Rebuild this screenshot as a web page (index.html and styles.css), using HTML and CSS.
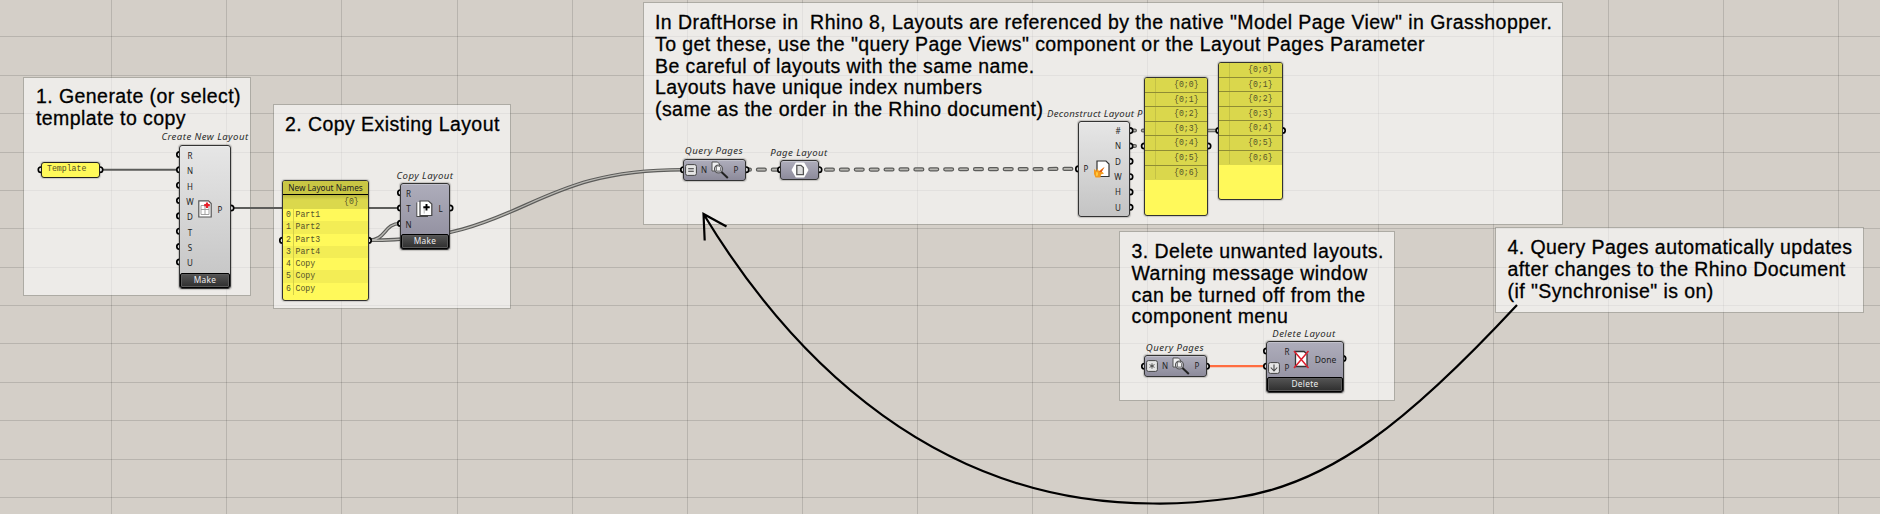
FILE: index.html
```html
<!DOCTYPE html>
<html lang="en">
<head>
<meta charset="utf-8">
<title>Layouts definition</title>
<link rel="stylesheet" href="styles.css">
</head>
<body>
<main class="canvas">
<svg class="layer" width="1880" height="514">
  <path class="grid" d="M111.5 0V514M226.5 0V514M341.5 0V514M457.5 0V514M572.5 0V514M687.5 0V514M802.5 0V514M917.5 0V514M1032.5 0V514M1147.5 0V514M1263.5 0V514M1378.5 0V514M1493.5 0V514M1608.5 0V514M1723.5 0V514M1838.5 0V514M0 36.500H1880M0 75.500H1880M0 113.500H1880M0 152.500H1880M0 190.500H1880M0 228.500H1880M0 267.500H1880M0 305.500H1880M0 343.500H1880M0 382.500H1880M0 420.500H1880M0 459.500H1880M0 497.500H1880"/>
</svg>

<section class="group g-create"><p class="note"><span>1. Generate (or select)</span><span>template to copy</span></p></section>
<section class="group g-copy"><p class="note"><span>2. Copy Existing Layout</span></p></section>
<section class="group g-query"><p class="note"><span>In DraftHorse in  Rhino 8, Layouts are referenced by the native "Model Page View" in Grasshopper.</span><span>To get these, use the "query Page Views" component or the Layout Pages Parameter</span><span>Be careful of layouts with the same name.</span><span>Layouts have unique index numbers</span><span>(same as the order in the Rhino document)</span></p></section>
<section class="group g-delete"><p class="note"><span>3. Delete unwanted layouts.</span><span>Warning message window</span><span>can be turned off from the</span><span>component menu</span></p></section>
<section class="group g-sync"><p class="note"><span>4. Query Pages automatically updates</span><span>after changes to the Rhino Document</span><span>(if "Synchronise" is on)</span></p></section>

<svg class="layer" width="1880" height="514">
  <g class="wire"><path d="M101 169.700H178M234 208H399"/></g>
  <g class="wire-list"><path d="M369 240.300C386 240.300 384 223.500 400 223.500M369 240.300C526 240.300 526 169.700 683 169.700M1208 130.500H1218"/></g>
  <g class="wire-core"><path d="M369 240.300C386 240.300 384 223.500 400 223.500M369 240.300C526 240.300 526 169.700 683 169.700M1208 130.500H1218"/></g>
  <g class="wire-tree"><path d="M743 169.700H780M826 169.700L1076 168.900M1128 130.500H1150M1128 146H1143"/></g>
  <g class="tree-core"><path d="M743 169.700H780M826 169.700L1076 168.900M1128 130.500H1150M1128 146H1143"/></g>
  <path class="wire-hot" d="M1208 366.200H1265"/>
  <path class="arrow" d="M703.500 214C795 365 940 503.500 1153 503.500C1180 504 1208 501.500 1233.700 498C1330 485 1410 420 1517 305M726.500 226.500L703.500 214L704.700 240.500"/>
  <g class="port">
    <circle cx="41" cy="169.700" r="2.700"/><circle cx="100" cy="169.700" r="2.700"/>
    <circle cx="179.500" cy="154.500" r="2.700"/><circle cx="179.500" cy="169.800" r="2.700"/><circle cx="179.500" cy="185.200" r="2.700"/><circle cx="179.500" cy="200.500" r="2.700"/><circle cx="179.500" cy="215.900" r="2.700"/><circle cx="179.500" cy="231.200" r="2.700"/><circle cx="179.500" cy="246.600" r="2.700"/><circle cx="179.500" cy="262" r="2.700"/>
    <circle cx="231" cy="208" r="2.700"/>
    <circle cx="282.500" cy="240.400" r="2.700"/><circle cx="368.500" cy="240.400" r="2.700"/>
    <circle cx="400.500" cy="192.700" r="2.700"/><circle cx="400.500" cy="208" r="2.700"/><circle cx="400.500" cy="223.400" r="2.700"/><circle cx="450" cy="208" r="2.700"/>
    <circle cx="683.500" cy="169.700" r="2.700"/><circle cx="746" cy="169.700" r="2.700"/>
    <circle cx="780.500" cy="169.700" r="2.700"/><circle cx="819" cy="169.700" r="2.700"/>
    <circle cx="1078.500" cy="168.900" r="2.700"/>
    <circle cx="1130" cy="130.600" r="2.700"/><circle cx="1130" cy="146" r="2.700"/><circle cx="1130" cy="161.300" r="2.700"/><circle cx="1130" cy="176.700" r="2.700"/><circle cx="1130" cy="192" r="2.700"/><circle cx="1130" cy="207.300" r="2.700"/>
    <circle cx="1144.300" cy="146" r="2.700"/><circle cx="1208" cy="146" r="2.700"/>
    <circle cx="1218.800" cy="130.500" r="2.700"/><circle cx="1282.500" cy="130.500" r="2.700"/>
    <circle cx="1144.500" cy="366.200" r="2.700"/><circle cx="1206.500" cy="366.200" r="2.700"/>
    <circle cx="1266.500" cy="351" r="2.700"/><circle cx="1266.500" cy="366.200" r="2.700"/><circle cx="1343" cy="358.500" r="2.700"/>
  </g>
</svg>

<div class="title t-create">Create New Layout</div>
<div class="title t-copy">Copy Layout</div>
<div class="title t-queryA">Query Pages</div>
<div class="title t-page">Page Layout</div>
<div class="title t-decon">Deconstruct Layout P</div>
<div class="title t-queryB">Query Pages</div>
<div class="title t-delete">Delete Layout</div>

<div class="panel p-template"><span>Template</span></div>

<div class="node plain n-create">
  <div class="body">
    <div class="col"><span>R</span><span>N</span><span>H</span><span>W</span><span>D</span><span>T</span><span>S</span><span>U</span></div>
    <svg class="icon" width="14" height="18" viewBox="0 0 14 18"><path d="M.8.800H10.500L13.200 3.500V17H.8Z" fill="#fff" stroke="#555" stroke-width="1.200"/><path d="M3 5.500H11V14.500H3ZM7 5.500V14.500M3 9.500H11" fill="none" stroke="#999" stroke-width=".9"/><path d="M9 2.500V8M6.200 5.200H11.800" stroke="#e8202a" stroke-width="2.200"/></svg>
    <div class="col"><span>P</span></div>
  </div>
  <div class="button">Make</div>
</div>

<div class="panel p-names">
  <div class="head">New Layout Names</div>
  <div class="path">{0}</div>
  <ol class="items">
    <li><i>0</i>Part1</li><li><i>1</i>Part2</li><li><i>2</i>Part3</li><li><i>3</i>Part4</li><li><i>4</i>Copy</li><li><i>5</i>Copy</li><li><i>6</i>Copy</li>
  </ol>
</div>

<div class="node n-copy">
  <div class="body">
    <div class="col"><span>R</span><span>T</span><span>N</span></div>
    <svg class="icon" width="17" height="18" viewBox="0 0 17 18"><path d="M1 2.500V16.500H12" fill="#fff" stroke="#444" stroke-width="1.200"/><path d="M1.500 2H4V16H1.500Z" fill="#fff"/><path d="M4 1H12.500L15.800 4V15.500H4Z" fill="#fff" stroke="#444" stroke-width="1.200"/><path d="M8.200 8V13.500" stroke="#bbb"/><path d="M10.500 4V10.500M7.300 7.200H13.700" stroke="#000" stroke-width="1.900"/></svg>
    <div class="col"><span>L</span></div>
  </div>
  <div class="button">Make</div>
</div>

<div class="node n-queryA">
  <div class="body">
    <svg class="badge" width="12" height="12" viewBox="0 0 12 12"><rect x=".6" y=".6" width="10.800" height="10.800" rx="1.800" fill="#e6e6e6" stroke="#444"/><path d="M3.200 4.700H8.800M3.200 7.300H8.800" stroke="#333" stroke-width="1.100"/></svg>
    <div class="col"><span>N</span></div>
    <svg class="icon lens" width="18" height="18" viewBox="0 0 18 18"><path d="M1 1H6.500L8.500 3V10H1Z" fill="#f0f0f2" stroke="#555"/><circle cx="7.500" cy="8" r="4" fill="#d0d0d8" fill-opacity=".7" stroke="#555" stroke-width="1.200"/><path d="M5.500 5H8L9.500 6.500V10H5.500Z" fill="#f4f4f4" stroke="#666" stroke-width=".8"/><path d="M10.500 11L16.800 17" stroke="#222" stroke-width="2"/></svg>
    <div class="col"><span>P</span></div>
  </div>
</div>

<div class="node n-page">
  <svg width="18" height="16" viewBox="0 0 18 16"><path d="M4.800.500H13.200L17.500 8L13.200 15.500H4.800L.5 8Z" fill="#fff"/><path d="M5.800 3.300H10L12.400 5.600V12.700H5.800Z" fill="#ddd" stroke="#555" stroke-width="1.300"/></svg>
</div>

<div class="node plain n-decon">
  <div class="body">
    <div class="col"><span>P</span></div>
    <svg class="icon" width="18" height="18" viewBox="0 0 18 18"><path d="M4 1H13L16 4V16.500H4Z" fill="#fff" stroke="#333" stroke-width="1.200"/><path d="M1 9L3.500 11L4 8.500L6 11L11.500 7L8.800 11.500L11 13.500L8 14.500L7.500 17.500H2.500L1 14Z" fill="#f49a1c"/><path d="M6 12L11.500 7L8.500 12Z" fill="#d9511b"/><path d="M3 12L5 12.500L5 15.500L3 16Z" fill="#ffc93c"/></svg>
    <div class="col"><span>#</span><span>N</span><span>D</span><span>W</span><span>H</span><span>U</span></div>
  </div>
</div>

<div class="panel tree p-treeA"><span>{0;0}</span><span>{0;1}</span><span>{0;2}</span><span>{0;3}</span><span>{0;4}</span><span>{0;5}</span><span>{0;6}</span></div>
<div class="panel tree p-treeB"><span>{0;0}</span><span>{0;1}</span><span>{0;2}</span><span>{0;3}</span><span>{0;4}</span><span>{0;5}</span><span>{0;6}</span></div>

<div class="node n-queryB">
  <div class="body">
    <svg class="badge" width="12" height="12" viewBox="0 0 12 12"><rect x=".6" y=".6" width="10.800" height="10.800" rx="1.800" fill="#e6e6e6" stroke="#444"/><path d="M6 3.300V8.700M3.500 4.600L8.500 7.400M3.500 7.400L8.500 4.600" stroke="#444" stroke-width=".9"/></svg>
    <div class="col"><span>N</span></div>
    <svg class="icon lens" width="18" height="18" viewBox="0 0 18 18"><path d="M1 1H6.500L8.500 3V10H1Z" fill="#f0f0f2" stroke="#555"/><circle cx="7.500" cy="8" r="4" fill="#d0d0d8" fill-opacity=".7" stroke="#555" stroke-width="1.200"/><path d="M5.500 5H8L9.500 6.500V10H5.500Z" fill="#f4f4f4" stroke="#666" stroke-width=".8"/><path d="M10.500 11L16.800 17" stroke="#222" stroke-width="2"/></svg>
    <div class="col"><span>P</span></div>
  </div>
</div>

<div class="node n-delete">
  <div class="body">
    <svg class="badge" width="12" height="12" viewBox="0 0 12 12"><rect x=".6" y=".6" width="10.800" height="10.800" rx="1.800" fill="#e6e6e6" stroke="#444"/><path d="M6 2.500V9M2.800 5.500L6 9L9.200 5.500" fill="none" stroke="#444" stroke-width="1.100"/></svg>
    <div class="col"><span>R</span><span>P</span></div>
    <svg class="icon" width="17" height="19" viewBox="0 0 17 19"><path d="M2.500 1.500H11L14 4V16.500H2.500Z" fill="#fff" stroke="#333" stroke-width="1.300"/><path d="M1 1L15.500 18M15.500 1L1 18" stroke="#dc1f2e" stroke-width="1.500"/></svg>
    <div class="col"><span>Done</span></div>
  </div>
  <div class="button">Delete</div>
</div>
</main>
</body>
</html>
```

FILE: styles.css
```css
body { margin: 0; }
.canvas {
  position: relative;
  width: 1880px;
  height: 514px;
  overflow: hidden;
  background: #d4cfc8;
  font-family: "Noto Sans", sans-serif;
}
.layer { position: absolute; left: 0; top: 0; }
.grid { stroke: #000; stroke-opacity: .13; fill: none; }

/* groups with notes */
.group {
  position: absolute;
  box-sizing: border-box;
  border: 1px solid rgba(120, 122, 115, .42);
  background: rgba(255, 255, 255, .59);
  background-clip: padding-box;
}
.note {
  margin: 0;
  white-space: pre;
  font: 19.5px/21.7px "Liberation Sans", Arial, sans-serif;
  letter-spacing: .43px;
  color: #000;
  -webkit-text-stroke: .3px #000;
}
.note span { display: block; width: fit-content; }
.g-create { left: 23px; top: 77px; width: 228px; height: 219px; padding: 8.100px 12px; }
.g-copy { left: 273px; top: 104px; width: 238px; height: 205px; padding: 9px 11px; }
.g-query { left: 643px; top: 2px; width: 920px; height: 223px; padding: 9.100px 11px; }
.g-delete { left: 1119px; top: 231px; width: 276px; height: 170px; padding: 9.100px 11.500px; }
.g-sync { left: 1495px; top: 227px; width: 369px; height: 86px; padding: 9.100px 11.500px; }

/* wires */
.wire { stroke: #5c5c5a; stroke-width: 2; fill: none; }
.wire-list { stroke: #5c5c5a; stroke-width: 3.600; fill: none; }
.wire-core { stroke: #b9b8b3; stroke-width: 1.300; fill: none; }
.wire-tree { stroke: #5c5c5a; stroke-width: 4.200; stroke-dasharray: 6.900 8; stroke-linecap: round; fill: none; }
.tree-core { stroke: #b9b8b3; stroke-width: 1.700; stroke-dasharray: 6.900 8; stroke-linecap: round; fill: none; }
.wire-hot { stroke: #ff6d40; stroke-width: 2.300; }
.arrow { stroke: #000; stroke-width: 2.200; fill: none; }
.port { fill: #fff; stroke: #000; stroke-width: 1.700; }

/* component titles */
.title {
  position: absolute;
  width: 130px;
  text-align: center;
  white-space: nowrap;
  font: italic 9.600px/12px "Noto Sans", sans-serif;
  letter-spacing: .45px;
  color: #2b2b2b;
}
.t-create { left: 140px; top: 131px; }
.t-copy { left: 360px; top: 170px; }
.t-queryA { left: 649px; top: 145px; }
.t-page { left: 734px; top: 146.500px; }
.t-decon { left: 1047px; top: 107.500px; width: 97px; overflow: hidden; text-align: left; letter-spacing: .3px; }
.t-queryB { left: 1110px; top: 342px; }
.t-delete { left: 1239px; top: 328px; }

/* components */
.node {
  position: absolute;
  box-sizing: border-box;
  display: flex;
  flex-direction: column;
  border: 1px solid #333;
  border-radius: 3px;
  background: linear-gradient(#aeadbb, #8d8b9b);
  box-shadow: 0 0 1px 1px rgba(0, 0, 0, .18), inset 0 1px 0 rgba(255, 255, 255, .25);
  font-size: 8px;
  color: #222;
}
.plain { background: linear-gradient(#e6e6e6, #c4c4c4); }
.body { flex: 1; display: flex; align-items: center; }
.col { display: flex; flex-direction: column; text-align: center; line-height: 15.350px; width: 12px; }
.icon { flex: none; }
.button {
  box-sizing: border-box;
  height: 15px;
  border: 1px solid #000;
  border-radius: 2px;
  background: linear-gradient(#555, #2e2e2e);
  box-shadow: inset 0 0 0 1px #5a5a5a;
  color: #eee;
  text-align: center;
  font-size: 8.300px;
  line-height: 12.500px;
  letter-spacing: .3px;
}
.n-create { left: 179px; top: 145px; width: 52px; height: 143.500px; }
.n-create .body { padding: 0 4px 0 4px; gap: 2px; }
.n-copy { left: 400px; top: 183px; width: 50px; height: 67px; }
.n-copy .body { padding: 0 3px 0 2px; gap: 2px; }
.n-queryA { left: 683px; top: 159px; width: 63px; height: 22px; }
.n-queryB { left: 1144px; top: 355px; width: 63px; height: 22px; }
.n-queryA .body, .n-queryB .body { padding-left: 1px; gap: 1px; }
.lens { align-self: flex-start; margin-top: 1px; }
.n-page { left: 780px; top: 160px; width: 39px; height: 20px; align-items: center; justify-content: center; }
.n-decon { left: 1078px; top: 121px; width: 52px; height: 96px; }
.n-decon .body { padding-left: 1px; gap: 1px; }
.n-delete { left: 1266px; top: 341px; width: 78px; height: 52px; }
.n-delete .body { padding-left: 1px; gap: 1px; }
.n-delete .badge { align-self: flex-end; margin-bottom: 3px; }
.n-delete .icon { margin-left: -1px; }
.n-delete .col:last-child { width: 29px; font-size: 8.500px; }

/* panels */
.panel {
  position: absolute;
  box-sizing: border-box;
  overflow: hidden;
  border: 1px solid #333;
  border-radius: 3px;
  background: #fff95a;
  box-shadow: 0 0 1px 1px rgba(0, 0, 0, .15);
  font: 8.200px/12.270px "Liberation Mono", monospace;
  color: #55532a;
}
.p-template { left: 41px; top: 162px; width: 59px; height: 16px; padding-left: 5px; border-color: #222; }
.p-names { left: 282px; top: 180px; width: 87px; height: 121px; }
.head {
  height: 13px;
  border-bottom: 1px solid #000;
  background: #c9c644;
  color: #222;
  text-align: center;
  font: 8.200px/13px "Noto Sans", sans-serif;
}
.path { height: 14px; padding-left: 61px; background: linear-gradient(#bab73f, #dbd84c 35%); line-height: 13px; }
.items { margin: 0; padding: 0; list-style: none; }
.items li { display: flex; gap: 2.500px; padding-left: 3px; background: linear-gradient(90deg, transparent 10.500px, #d2cd4a 10.500px, #d2cd4a 11.500px, transparent 11.500px); line-height: 12.270px; }
.items li:nth-child(even) { background-color: #f3ed55; }
.items i { font-style: normal; width: 7px; }
.tree span {
  display: block;
  box-sizing: border-box;
  height: 14.620px;
  padding-left: 29px;
  border-bottom: 1px solid #8f8c34;
  background: linear-gradient(90deg, #dad74c 10.500px, #c4c145 10.500px, #c4c145 11.500px, #dad74c 11.500px);
  line-height: 13px;
}
.tree span:last-child { border-bottom-color: #dad74c; }
.p-treeA { left: 1144px; top: 77px; width: 64px; height: 138.500px; }
.p-treeB { left: 1218px; top: 62px; width: 65px; height: 138px; }
```
